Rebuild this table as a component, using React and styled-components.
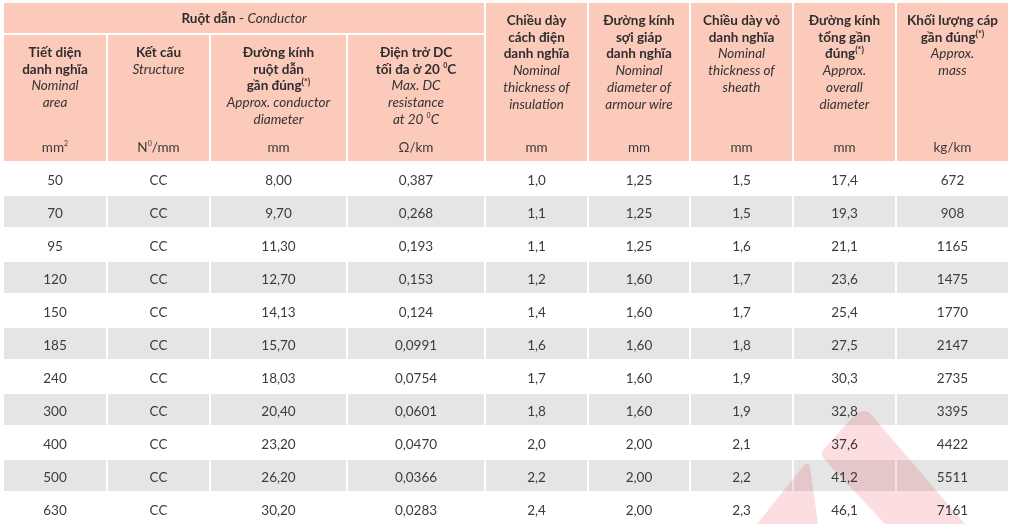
import styled, { createGlobalStyle } from "styled-components";

const GlobalStyle = createGlobalStyle`
  html, body {
    margin: 0;
    padding: 0;
    background: #ffffff;
  }
  body {
    font-family: Lato, "Open Sans", sans-serif;
    overflow: hidden;
  }
`;

const Page = styled.div`
  position: relative;
  width: 1014px;
  height: 524px;
  overflow: hidden;
  padding: 3px 0 0 4px;
  box-sizing: border-box;
`;

const Grid = styled.div`
  display: grid;
  grid-template-columns: 102px 101px 135px 136px 101px 100px 101px 101px 111px;
  grid-template-rows: 30px 126px repeat(11, 31px);
  gap: 2px;
`;

const HeadCell = styled.div`
  background: #fccabb;
  color: #2e2e2e;
  font-size: 13.5px;
  line-height: 16.7px;
  text-align: center;
  display: flex;
  flex-direction: column;
  align-items: center;
  padding: 9px 2px 5px;
  box-sizing: border-box;
  white-space: nowrap;
  grid-column: ${(p) => p.$col || "auto"};
  grid-row: ${(p) => p.$row || "auto"};
`;

const GroupCell = styled(HeadCell)`
  justify-content: center;
  padding: 1px 0 0;
`;

const Bold = styled.span`
  font-weight: 700;
`;

const Italic = styled.span`
  font-style: italic;
  color: #333333;
`;

const Sup = styled.sup`
  font-size: ${(p) => (p.$small ? "7px" : "9px")};
  line-height: 0;
  vertical-align: ${(p) => (p.$small ? "6px" : "5px")};
`;

const Unit = styled.span`
  margin-top: auto;
  color: #3a3a3a;
`;

const Cell = styled.div`
  background: ${(p) => (p.$shade ? "#e5e5e5" : "#ffffff")};
  color: #3c3c3c;
  font-size: 13.5px;
  display: flex;
  align-items: center;
  justify-content: center;
  padding-top: 2px;
  box-sizing: border-box;
`;

const Watermark = styled.svg`
  position: absolute;
  left: 0;
  top: 0;
  width: 1014px;
  height: 524px;
  pointer-events: none;
  mix-blend-mode: multiply;
`;

const rows = [
  ["50", "CC", "8,00", "0,387", "1,0", "1,25", "1,5", "17,4", "672"],
  ["70", "CC", "9,70", "0,268", "1,1", "1,25", "1,5", "19,3", "908"],
  ["95", "CC", "11,30", "0,193", "1,1", "1,25", "1,6", "21,1", "1165"],
  ["120", "CC", "12,70", "0,153", "1,2", "1,60", "1,7", "23,6", "1475"],
  ["150", "CC", "14,13", "0,124", "1,4", "1,60", "1,7", "25,4", "1770"],
  ["185", "CC", "15,70", "0,0991", "1,6", "1,60", "1,8", "27,5", "2147"],
  ["240", "CC", "18,03", "0,0754", "1,7", "1,60", "1,9", "30,3", "2735"],
  ["300", "CC", "20,40", "0,0601", "1,8", "1,60", "1,9", "32,8", "3395"],
  ["400", "CC", "23,20", "0,0470", "2,0", "2,00", "2,1", "37,6", "4422"],
  ["500", "CC", "26,20", "0,0366", "2,2", "2,00", "2,2", "41,2", "5511"],
  ["630", "CC", "30,20", "0,0283", "2,4", "2,00", "2,3", "46,1", "7161"],
];

const star = <Sup>(*)</Sup>;
const deg = <Sup $small>0</Sup>;

// header columns: bold lines, italic lines, unit
const heads = [
  { bold: ["Tiết diện", "danh nghĩa"], it: ["Nominal", "area"], unit: <>mm<Sup $small>2</Sup></> },
  { bold: ["Kết cấu"], it: ["Structure"], unit: <>N{deg}/mm</> },
  { bold: ["Đường kính", "ruột dẫn", <>gần đúng{star}</>], it: ["Approx. conductor", "diameter"], unit: "mm" },
  { bold: ["Điện trở DC", <>tối đa ở 20 {deg}C</>], it: ["Max. DC", "resistance", <>at 20 {deg}C</>], unit: "Ω/km" },
  { bold: ["Chiều dày", "cách điện", "danh nghĩa"], it: ["Nominal", "thickness of", "insulation"], unit: "mm", span: true },
  { bold: ["Đường kính", "sợi giáp", "danh nghĩa"], it: ["Nominal", "diameter of", "armour wire"], unit: "mm", span: true },
  { bold: ["Chiều dày vỏ", "danh nghĩa"], it: ["Nominal", "thickness of", "sheath"], unit: "mm", span: true },
  { bold: ["Đường kính", "tổng gần", <>đúng{star}</>], it: ["Approx.", "overall", "diameter"], unit: "mm", span: true },
  { bold: ["Khối lượng cáp", <>gần đúng{star}</>], it: ["Approx.", "mass"], unit: "kg/km", span: true },
];

export default function App() {
  return (
    <Page>
      <GlobalStyle />
      <Grid>
        <GroupCell $col="1 / 5" $row="1">
          <span>
            <Bold>Ruột dẫn</Bold> - <Italic>Conductor</Italic>
          </span>
        </GroupCell>
        {heads.map((h, i) => (
          <HeadCell key={i} $col={`${i + 1}`} $row={h.span ? "1 / 3" : "2"}>
            {h.bold.map((t, j) => (
              <Bold key={"b" + j}>{t}</Bold>
            ))}
            {h.it.map((t, j) => (
              <Italic key={"i" + j}>{t}</Italic>
            ))}
            <Unit>{h.unit}</Unit>
          </HeadCell>
        ))}
        {rows.map((r, ri) =>
          r.map((v, ci) => (
            <Cell key={ri + "-" + ci} $shade={ri % 2 === 1}>
              {v}
            </Cell>
          ))
        )}
      </Grid>
      <Watermark viewBox="0 0 1014 524">
        <g fill="#ee3340" opacity="0.16">
          <path d="M862 411 Q858 412 854 416 L824 449 Q820 454 824 459 L885 524 L965 524 L874 418 Q869 410 862 411 Z" />
          <path d="M804 465 L757 524 L818 524 L810 467 Q808 461 804 465 Z" />
        </g>
      </Watermark>
    </Page>
  );
}
